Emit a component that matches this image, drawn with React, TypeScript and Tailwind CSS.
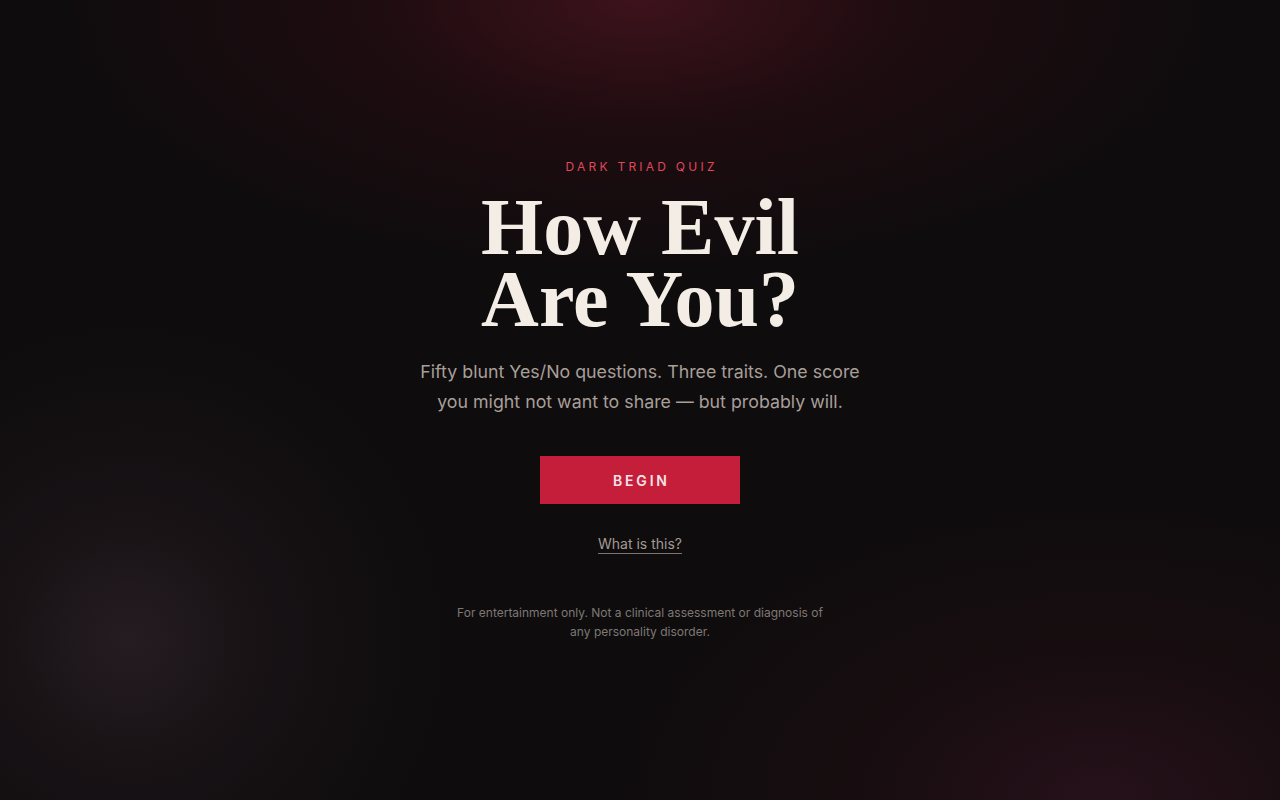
import React from "react";

export default function App() {
  return (
    <div
      className="relative min-h-screen w-full overflow-hidden bg-[#0e0c0d]"
      style={{ fontFamily: "Inter, 'Liberation Sans', sans-serif" }}
    >
      <div className="pointer-events-none absolute inset-0 bg-[radial-gradient(ellipse_600px_280px_at_640px_0px,#3d121b_0%,rgba(40,12,18,0.6)_45%,rgba(14,12,13,0)_100%)]" />
      <div className="pointer-events-none absolute inset-0 bg-[radial-gradient(circle_320px_at_130px_640px,#251c21_0%,rgba(30,22,26,0.6)_40%,rgba(14,12,13,0)_100%)]" />
      <div className="pointer-events-none absolute inset-0 bg-[radial-gradient(ellipse_520px_320px_at_1100px_800px,#26111a_0%,rgba(30,14,18,0.6)_45%,rgba(14,12,13,0)_100%)]" />

      <div className="relative flex min-h-screen flex-col items-center justify-center text-center">
        <div className="text-[12px] leading-4 tracking-[0.27em] pl-[0.27em] text-[#e0475c]">
          DARK TRIAD QUIZ
        </div>
        <h1
          className="mt-[16px] text-[80px] leading-[72px] font-bold text-[#f3ede6]"
          style={{ fontFamily: "'Liberation Serif', serif" }}
        >
          How Evil
          <br />
          Are You?
        </h1>
        <p className="mt-[22px] max-w-[450px] text-[17.8px] leading-[30px] text-[#a89f99]">
          Fifty blunt Yes/No questions. Three traits. One score you might not want to share — but probably will.
        </p>
        <button className="mt-[39px] h-12 w-[200px] bg-[#c41e3a] text-[14px] font-semibold tracking-[0.2em] pl-[0.2em] text-[#f7e3e6]">
          BEGIN
        </button>
        <a
          href="#"
          className="mt-[30px] text-[14px] leading-5 text-[#a39a94] underline decoration-[#7d7470] underline-offset-[4px]"
        >
          What is this?
        </a>
        <p className="mt-[49px] max-w-[380px] text-[12px] leading-[19px] text-[#7f7874]">
          For entertainment only. Not a clinical assessment or diagnosis of any personality disorder.
        </p>
      </div>
    </div>
  );
}
